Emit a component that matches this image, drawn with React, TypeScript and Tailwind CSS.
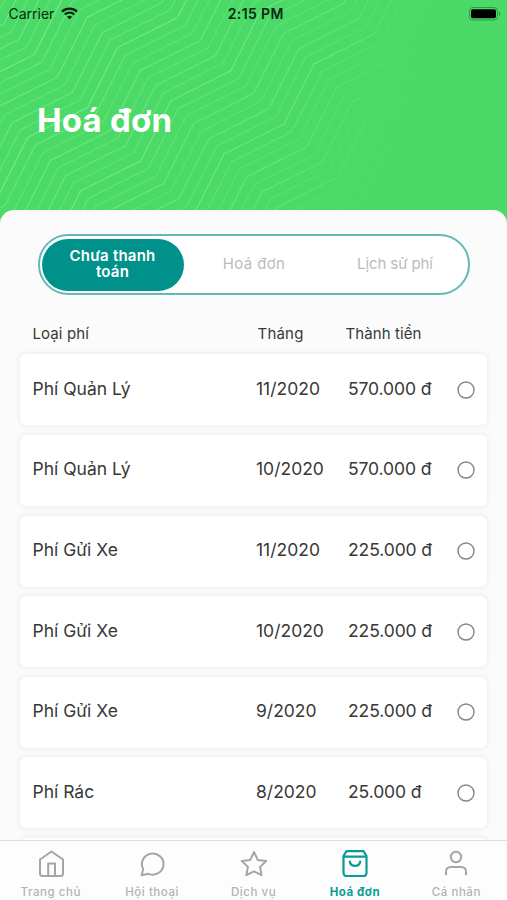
import type { ReactNode } from "react"

const bills = [
  { name: "Phí Quản Lý", month: "11/2020", amount: "570.000 đ" },
  { name: "Phí Quản Lý", month: "10/2020", amount: "570.000 đ" },
  { name: "Phí Gửi Xe", month: "11/2020", amount: "225.000 đ" },
  { name: "Phí Gửi Xe", month: "10/2020", amount: "225.000 đ" },
  { name: "Phí Gửi Xe", month: "9/2020", amount: "225.000 đ" },
  { name: "Phí Rác", month: "8/2020", amount: "25.000 đ" },
  { name: "", month: "", amount: "" },
]

// one stepped line, repeated diagonally
function zigzag(index: number) {
  const x = 148 + index * 7.6
  const y = 78 + index * 7.6
  const points: string[] = []
  for (let i = -5; i <= 5; i++) {
    points.push(`${x + i * 90},${y - i * 90}`)
    points.push(`${x + i * 90 + 60},${y - i * 90 - 30}`)
  }
  return points.join(" ")
}

const strengths = [0.45, 0.65, 0.5, 0.8, 0.55, 0.45, 0.7]

function HeaderPattern() {
  return (
    <svg className="absolute inset-0" width="507" height="230" viewBox="0 0 507 230" fill="none">
      <defs>
        <linearGradient id="fade" gradientUnits="userSpaceOnUse" x1="60" y1="0" x2="410" y2="120">
          <stop offset="0" stopColor="#fff" stopOpacity="1" />
          <stop offset="0.7" stopColor="#fff" stopOpacity="0.75" />
          <stop offset="1" stopColor="#fff" stopOpacity="0" />
        </linearGradient>
        <mask id="fadeMask" maskUnits="userSpaceOnUse" x="0" y="0" width="507" height="230">
          <rect width="507" height="230" fill="url(#fade)" />
        </mask>
      </defs>
      <g mask="url(#fadeMask)" stroke="#86f08e" strokeWidth="1.1">
        {Array.from({ length: 56 }, (_, i) => (
          <polyline key={i} points={zigzag(i - 21)} strokeOpacity={strengths[i % 7]} />
        ))}
      </g>
    </svg>
  )
}

function StatusBar() {
  return (
    <div className="relative grid h-[27px] grid-cols-3 items-center pl-[8.5px] pr-[6px] text-[14px] text-[#0b2913]">
      <div className="flex items-center gap-[7px]">
        <span>Carrier</span>
        <svg width="17" height="13" viewBox="0 0 17 13" fill="none" stroke="#06200d" strokeWidth="2.2">
          <path d="M1 4.6C5.2.6 11.8.6 16 4.6" />
          <path d="M3.8 7.5c2.7-2.5 6.7-2.5 9.4 0" />
          <path d="M8.5 12.3 5.9 9.7c1.5-1.2 3.7-1.2 5.2 0z" fill="#06200d" stroke="none" />
        </svg>
      </div>
      <span className="pl-[2px] text-center text-[14px] font-semibold tracking-[0.4px]">2:15 PM</span>
      <svg className="justify-self-end" width="32" height="14" viewBox="0 0 32 14">
        <rect x="0.5" y="0.5" width="28" height="12.5" rx="3.5" fill="none" stroke="#2d9848" />
        <rect x="2" y="2.2" width="25" height="9" rx="2" fill="#000" />
        <path d="M30 4.5c1.7.5 1.7 4 0 4.5z" fill="#2d9848" />
      </svg>
    </div>
  )
}

function BillCard({ name, month, amount }: { name: string; month: string; amount: string }) {
  return (
    <div className="flex h-[71px] shrink-0 items-center rounded-[6px] bg-white px-[12px] text-[17.5px] text-[#383838] shadow-[0_0_4px_2px_rgba(0,0,0,0.045)]">
      <span className="-mt-[2px] w-[224px] pl-[0.5px]">{name}</span>
      <span className="-mt-[2px] w-[92px]">{month}</span>
      <span className="-mt-[2px] flex-1 whitespace-nowrap tracking-[-0.1px]">{amount}</span>
      <svg width="18" height="18" viewBox="0 0 18 18" fill="none">
        <circle cx="9" cy="9" r="8" stroke="#858585" strokeWidth="1.4" />
      </svg>
    </div>
  )
}

function NavItem({ label, active, children }: { label: string; active?: boolean; children: ReactNode }) {
  return (
    <div className={`flex flex-1 flex-col items-center ${active ? "text-[#0c9c96]" : "text-[#a2a6a8]"}`}>
      <svg
        width="30"
        height="30"
        viewBox="0 0 30 30"
        fill="none"
        stroke="currentColor"
        strokeWidth={active ? 2.2 : 2}
        strokeLinecap="round"
        strokeLinejoin="round"
      >
        {children}
      </svg>
      <span
        className={`mt-[6px] whitespace-nowrap text-[11.5px] leading-[15px] tracking-[0.55px] ${active ? "font-bold" : "font-medium text-[#b0b3b5]"}`}
      >
        {label}
      </span>
    </div>
  )
}

export default function App() {
  return (
    <div className="relative flex h-[900px] w-[507px] flex-col overflow-hidden bg-[#4bd967] font-['Inter',sans-serif]">
      <HeaderPattern />

      {/* Header */}
      <header className="relative h-[210px] shrink-0">
        <StatusBar />
        <h1 className="pl-[37px] pt-[73px] text-[33px] font-bold leading-[40px] tracking-[0.2px] text-white">Hoá đơn</h1>
      </header>

      {/* Content */}
      <main className="relative flex min-h-0 flex-1 flex-col overflow-hidden rounded-t-[14px] bg-[#fbfbfb] pt-[24px]">
        <div className="mx-[37.5px] flex h-[61px] shrink-0 items-center rounded-full border-2 border-[#62b9b5] bg-white p-[2px] text-[15px] text-[#b9bcbe]">
          <div className="flex h-[52px] w-[142px] items-center justify-center rounded-full bg-[#01918b] px-5 pb-px text-center text-[15px] font-semibold leading-[16px] tracking-[0.2px] text-white">
            Chưa thanh toán
          </div>
          <span className="w-[141px] text-center tracking-[0.4px]">Hoá đơn</span>
          <span className="w-[141px] text-center tracking-[-0.1px]">Lịch sử phí</span>
        </div>

        <div className="mt-[29px] flex h-[20px] shrink-0 items-center pl-[32.5px] text-[15px] text-[#383838]">
          <span className="w-[225px] tracking-[0.1px]">Loại phí</span>
          <span className="w-[88px] tracking-[0.2px]">Tháng</span>
          <span className="tracking-[0.1px]">Thành tiền</span>
        </div>

        <div className="mt-[10.4px] flex min-h-0 flex-1 flex-col gap-[9.6px] px-[20px]">
          {bills.map((bill, i) => (
            <BillCard key={i} {...bill} />
          ))}
        </div>
      </main>

      {/* Tab bar */}
      <nav className="relative flex h-[60px] shrink-0 border-t border-[#dedede] bg-[#fdfdfd] pt-[8px]">
        <NavItem label="Trang chủ">
          <path d="M4 10.5 15.5 2.5l11.5 8V24.5a2.500 2.500 0 0 1-2.500 2.500H6.500A2.500 2.500 0 0 1 4 24.500z" />
          <path d="M12.200 26.500V14.500h6.800v12" />
        </NavItem>
        <NavItem label="Hội thoại">
          <path d="M4.500 26.300 6.300 20.200A10.800 10.600 0 1 1 11.500 24.800z" />
        </NavItem>
        <NavItem label="Dịch vụ">
          <path d="m15 3 3.700 7.900 8.500 1.100-6.100 5.900 1.500 8.300-7.600-3.900-7.600 3.900 1.500-8.300-6.100-5.900 8.500-1.100z" />
        </NavItem>
        <NavItem label="Hoá đơn" active>
          <path d="M6.500 2.200h17L26.500 7v17a3 3 0 0 1-3 3h-17a3 3 0 0 1-3-3V7zM4 7.600h22" />
          <path d="M9.800 12.500c.8 5.800 9.600 5.800 10.400 0" />
        </NavItem>
        <NavItem label="Cá nhân">
          <circle cx="15" cy="8" r="5.200" />
          <path d="M5 25.500V23c0-3 2-5 5-5h10c3 0 5 2 5 5v2.500" />
        </NavItem>
      </nav>
    </div>
  )
}
